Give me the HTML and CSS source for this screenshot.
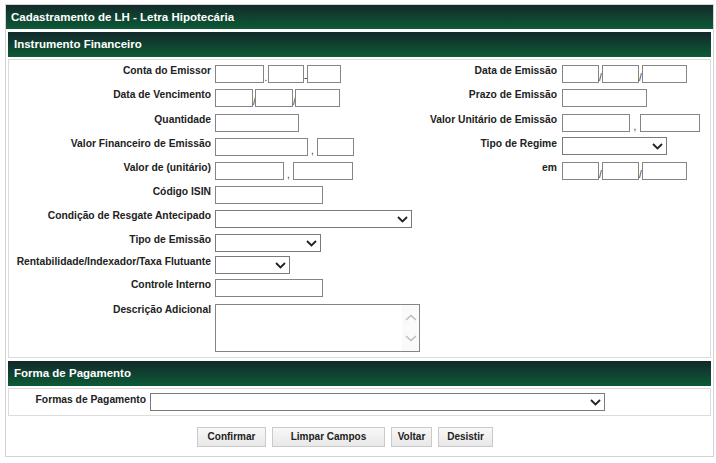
FILE: index.html
```html
<!DOCTYPE html>
<html lang="pt-BR">
<head>
<meta charset="utf-8">
<title>Cadastramento de LH - Letra Hipotecária</title>
<link rel="stylesheet" href="styles.css">
</head>
<body>
<div class="frame">
  <div class="title">Cadastramento de LH - Letra Hipotecária</div>

  <div class="section">
    <div class="sec-head">Instrumento Financeiro</div>
    <div class="sec-body form-grid">
      <div class="lbl l1">Conta do Emissor</div>
      <div class="fld f1"><span class="inp w49"></span><span class="sep s4">.</span><span class="inp w36"></span><span class="sep s3">-</span><span class="inp w34"></span></div>
      <div class="lbl l2">Data de Emissão</div>
      <div class="fld f2"><span class="inp w37"></span><span class="sep s3">/</span><span class="inp w37"></span><span class="sep s3">/</span><span class="inp w45"></span></div>

      <div class="lbl l1">Data de Vencimento</div>
      <div class="fld f1"><span class="inp w38"></span><span class="sep s2">/</span><span class="inp w38"></span><span class="sep s2">/</span><span class="inp w45"></span></div>
      <div class="lbl l2">Prazo de Emissão</div>
      <div class="fld f2"><span class="inp w85"></span></div>

      <div class="lbl l1">Quantidade</div>
      <div class="fld f1"><span class="inp w84"></span></div>
      <div class="lbl l2">Valor Unitário de Emissão</div>
      <div class="fld f2"><span class="inp w68"></span><span class="sep s10">,</span><span class="inp w60"></span></div>

      <div class="lbl l1">Valor Financeiro de Emissão</div>
      <div class="fld f1"><span class="inp w93"></span><span class="sep s9">,</span><span class="inp w37"></span></div>
      <div class="lbl l2">Tipo de Regime</div>
      <div class="fld f2 up1"><span class="sel w105"><svg class="chev" width="11" height="7" viewBox="0 0 11 7"><path d="M1 1 L5.5 5.5 L10 1" /></svg></span></div>

      <div class="lbl l1">Valor de (unitário)</div>
      <div class="fld f1"><span class="inp w69"></span><span class="sep s9">,</span><span class="inp w60"></span></div>
      <div class="lbl l2 reg">em</div>
      <div class="fld f2"><span class="inp w37"></span><span class="sep s3">/</span><span class="inp w37"></span><span class="sep s3">/</span><span class="inp w45"></span></div>

      <div class="lbl l1">Código ISIN</div>
      <div class="fld f1"><span class="inp w108"></span></div>

      <div class="lbl l1">Condição de Resgate Antecipado</div>
      <div class="fld f1"><span class="sel w197"><svg class="chev" width="11" height="7" viewBox="0 0 11 7"><path d="M1 1 L5.5 5.5 L10 1" /></svg></span></div>

      <div class="lbl l1">Tipo de Emissão</div>
      <div class="fld f1"><span class="sel w106"><svg class="chev" width="11" height="7" viewBox="0 0 11 7"><path d="M1 1 L5.5 5.5 L10 1" /></svg></span></div>

      <div class="lbl l1">Rentabilidade/Indexador/Taxa Flutuante</div>
      <div class="fld f1"><span class="sel w75"><svg class="chev" width="11" height="7" viewBox="0 0 11 7"><path d="M1 1 L5.5 5.5 L10 1" /></svg></span></div>

      <div class="lbl l1">Controle Interno</div>
      <div class="fld f1"><span class="inp w108"></span></div>

      <div class="lbl l1">Descrição Adicional</div>
      <div class="fld f1"><span class="txa w205"><span class="scroll"><svg class="sc" width="12" height="7" viewBox="0 0 12 7"><path d="M1 6 L6 1.5 L11 6" /></svg><svg class="sc" width="12" height="7" viewBox="0 0 12 7"><path d="M1 1 L6 5.5 L11 1" /></svg></span></span></div>
    </div>
  </div>

  <div class="section sec2">
    <div class="sec-head">Forma de Pagamento</div>
    <div class="sec-body pay-grid">
      <div class="lbl lp">Formas de Pagamento</div>
      <div class="fld"><span class="sel w455"><svg class="chev" width="11" height="7" viewBox="0 0 11 7"><path d="M1 1 L5.5 5.5 L10 1" /></svg></span></div>
    </div>
  </div>

  <div class="buttons">
    <span class="btn b-conf">Confirmar</span>
    <span class="btn b-limp">Limpar Campos</span>
    <span class="btn b-volt">Voltar</span>
    <span class="btn b-des">Desistir</span>
  </div>
</div>
</body>
</html>
```

FILE: styles.css
```css
* { box-sizing: border-box; }

body {
  margin: 0;
  background: #ffffff;
  color: #222222;
  font-family: "Liberation Sans", Arial, sans-serif;
}

.frame {
  margin: 4px 2px 0 5px;
  border: 1px solid #d3d3d3;
  padding-bottom: 9px;
}

.title {
  height: 24px;
  line-height: 24px;
  padding-left: 5px;
  color: #ffffff;
  font-weight: bold;
  font-size: 11.5px;
  background: linear-gradient(#132a2a, #0d5a37);
}

.section {
  margin: 3px 2px 0 2px;
}

.sec-head {
  height: 25px;
  line-height: 25px;
  padding-left: 6px;
  color: #ffffff;
  font-weight: bold;
  font-size: 11.5px;
  background: linear-gradient(#13282a, #0c5b37);
}

.sec-body {
  margin-top: 2px;
  border: 1px solid #dcdcdc;
}

.form-grid {
  display: grid;
  grid-template-columns: 206px 205px 142px 1fr;
  grid-template-rows: 24px 25px 24px 24px 24px 24px 24px 22px 23px 25px 48px;
  padding: 5px 0 5px 0;
}

.l1 { grid-column: 1; }
.f1 { grid-column: 2; }
.l2 { grid-column: 3; }
.f2 { grid-column: 4; }

.lbl {
  font-size: 10.3px;
  font-weight: bold;
  line-height: 12px;
  text-align: right;
  padding-right: 4px;
  white-space: nowrap;
}

.l2 { padding-right: 5px; }

.fld {
  display: flex;
  align-items: flex-end;
  align-self: start;
}

.up1 { margin-top: -1px; }

.inp, .sel, .txa {
  display: block;
  height: 18px;
  border: 1px solid #858585;
  background: #ffffff;
}

.sel {
  display: flex;
  align-items: center;
  justify-content: flex-end;
  padding-right: 3px;
  border-color: #7a7a7a;
}

.chev path {
  fill: none;
  stroke: #222222;
  stroke-width: 1.8;
}

.txa {
  height: 48px;
  display: flex;
  justify-content: flex-end;
}

.scroll {
  width: 17px;
  display: flex;
  flex-direction: column;
  justify-content: space-between;
  align-items: center;
  padding: 9px 0 9px 0;
  background: #fafafa;
}

.sc path {
  fill: none;
  stroke: #bdbdbd;
  stroke-width: 1.5;
}

.sep {
  display: block;
  font-size: 10px;
  line-height: 10px;
  text-align: center;
  color: #333333;
}

.s2 { width: 2px; }
.s3 { width: 3px; }
.s4 { width: 4px; }
.s9 { width: 9px; }
.s10 { width: 10px; }

.w34 { width: 34px; }
.w36 { width: 36px; }
.w37 { width: 37px; }
.w38 { width: 38px; }
.w45 { width: 45px; }
.w49 { width: 49px; }
.w60 { width: 60px; }
.w68 { width: 68px; }
.w69 { width: 69px; }
.w75 { width: 75px; }
.w84 { width: 84px; }
.w85 { width: 85px; }
.w93 { width: 93px; }
.w105 { width: 105px; }
.w106 { width: 106px; }
.w108 { width: 108px; }
.w197 { width: 197px; }
.w205 { width: 205px; }
.w455 { width: 455px; }

.pay-grid {
  display: grid;
  grid-template-columns: 141px 1fr;
  padding: 4px 0 4px 0;
}

.lp { padding-top: 1px; }

.buttons {
  display: flex;
  gap: 6px;
  margin-top: 11px;
  padding-left: 191px;
}

.btn {
  display: block;
  height: 20px;
  line-height: 18px;
  text-align: center;
  font-size: 10px;
  font-weight: bold;
  color: #222222;
  border: 1px solid #cacaca;
  background: linear-gradient(#f8f8f8, #e8e8e8);
}

.b-conf { width: 69px; }
.b-limp { width: 113px; }
.b-volt { width: 41px; }
.b-des { width: 55px; }
```
